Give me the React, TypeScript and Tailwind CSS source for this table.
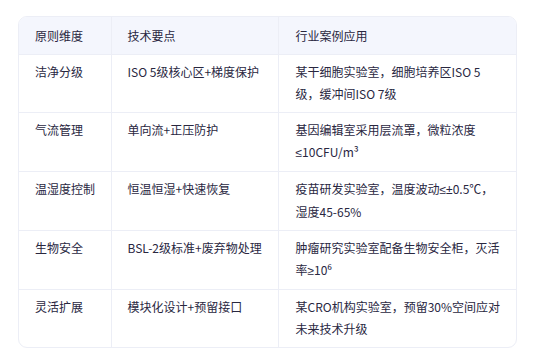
import React from "react";

const L = ({ children }: { children: React.ReactNode }) => (
  <span className="font-['Liberation_Sans']">{children}</span>
);

const rows: [string, string, React.ReactNode[]][] = [
  ["洁净分级", "ISO 5级核心区+梯度保护", ["某干细胞实验室，细胞培养区ISO 5", "级，缓冲间ISO 7级"]],
  ["气流管理", "单向流+正压防护", ["基因编辑室采用层流罩，微粒浓度", <><L>≤</L>10CFU/m³</>]],
  ["温湿度控制", "恒温恒湿+快速恢复", [<>疫苗研发实验室，温度波动<L>≤±</L>0.5℃，</>, "湿度45-65%"]],
  ["生物安全", "BSL-2级标准+废弃物处理", ["肿瘤研究实验室配备生物安全柜，灭活", <>率<L>≥</L>10⁶</>]],
  ["灵活扩展", "模块化设计+预留接口", ["某CRO机构实验室，预留30%空间应对", "未来技术升级"]],
];

export default function App() {
  return (
    <div
      className="w-[554px] h-[359px] bg-white pt-[16px] pl-[18px]"
      style={{ fontFamily: '"Noto Sans CJK SC", "Noto Sans", sans-serif' }}
    >
      <div className="w-[499px] rounded-[9px] border border-[#eceef6] overflow-hidden">
        <table className="w-full border-collapse table-fixed text-[12px] leading-[22px] text-[#29273f]">
          <colgroup>
            <col className="w-[92px]" />
            <col className="w-[167px]" />
            <col />
          </colgroup>
          <thead>
            <tr className="bg-[#f4f6fd]">
              <th className="text-left font-normal pl-[16px] pr-[8px] pt-[8px] pb-[7px] border-r border-[#eceef6]">原则维度</th>
              <th className="text-left font-normal pl-[16px] pr-[8px] pt-[8px] pb-[7px] border-r border-[#eceef6]">技术要点</th>
              <th className="text-left font-normal pl-[17px] pr-[8px] pt-[8px] pb-[7px]">行业案例应用</th>
            </tr>
          </thead>
          <tbody>
            {rows.map((r, i) => (
              <tr key={i} className="border-t border-[#eceef6] align-top">
                <td className="pl-[16px] pr-[8px] pt-[6px] pb-[7px] border-r border-[#eceef6]">{r[0]}</td>
                <td className="pl-[16px] pr-[8px] pt-[6px] pb-[7px] border-r border-[#eceef6] whitespace-nowrap">{r[1]}</td>
                <td className="pl-[17px] pr-[8px] pt-[6px] pb-[7px]">
                  {r[2].map((line, j) => (
                    <div key={j} className="whitespace-nowrap">{line}</div>
                  ))}
                </td>
              </tr>
            ))}
          </tbody>
        </table>
      </div>
    </div>
  );
}
